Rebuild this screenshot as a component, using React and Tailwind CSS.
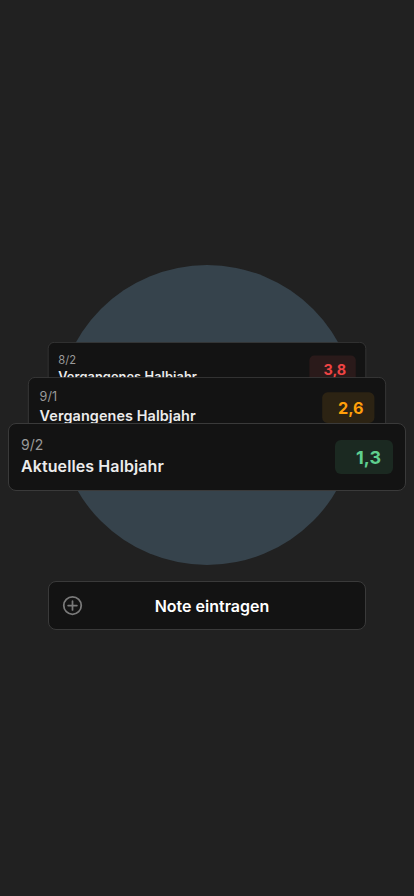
import React from "react";

const cards = [
  { label: "8/2", title: "Vergangenes Halbjahr", grade: "3,8", color: "text-[#ef4444]", bg: "bg-[#2a1a1a]", cls: "scale-[0.8] z-10", mt: "" },
  { label: "9/1", title: "Vergangenes Halbjahr", grade: "2,6", color: "text-[#ff9f0a]", bg: "bg-[#2c2313]", cls: "scale-[0.9] z-20 -mt-[33px]", mt: "" },
  { label: "9/2", title: "Aktuelles Halbjahr", grade: "1,3", color: "text-[#5fcf8f]", bg: "bg-[#1b2921]", cls: "scale-100 z-30 -mt-[22px]", mt: "" },
];

function Card({ c }) {
  return (
    <div
      className={`relative origin-top h-[68px] rounded-lg border border-[#3a3a3a] bg-[#131313] px-3 flex items-center justify-between ${c.cls}`}
    >
      <div className="flex flex-col">
        <span className="text-[14px] leading-[18px] text-[#9a9a9a] font-normal">{c.label}</span>
        <span className="text-[16px] leading-[24px] text-[#ececec] font-semibold tracking-[0.1px]">{c.title}</span>
      </div>
      <div className={`w-[58px] h-[34px] rounded-md ${c.bg} flex items-center justify-end pr-3`}>
        <span className={`text-[18px] font-bold ${c.color}`}>{c.grade}</span>
      </div>
    </div>
  );
}

export default function App() {
  return (
    <div
      className="w-[414px] h-[896px] bg-[#212121] overflow-hidden flex flex-col"
      style={{ fontFamily: "Inter, 'Noto Sans', sans-serif" }}
    >
      <div className="relative mt-[265px] h-[300px]">
        <div className="mx-auto size-[300px] rounded-full bg-[#36434c]" />
        <div className="absolute left-2 right-2 top-[77px] flex flex-col">
          {cards.map((c, i) => (
            <Card key={i} c={c} />
          ))}
        </div>
      </div>
      <button className="mx-12 mt-[16px] h-[49px] rounded-lg border border-[#3a3a3a] bg-[#131313] px-[13px] grid grid-cols-[21px_1fr_11px] items-center">
        <svg width="21" height="21" viewBox="0 0 24 24" fill="none" stroke="#7a7a7a" strokeWidth="2" strokeLinecap="round">
          <circle cx="12" cy="12" r="10" />
          <path d="M12 7v10M7 12h10" />
        </svg>
        <span className="text-center text-[16px] font-semibold text-white">Note eintragen</span>
        <span />
      </button>
    </div>
  );
}
